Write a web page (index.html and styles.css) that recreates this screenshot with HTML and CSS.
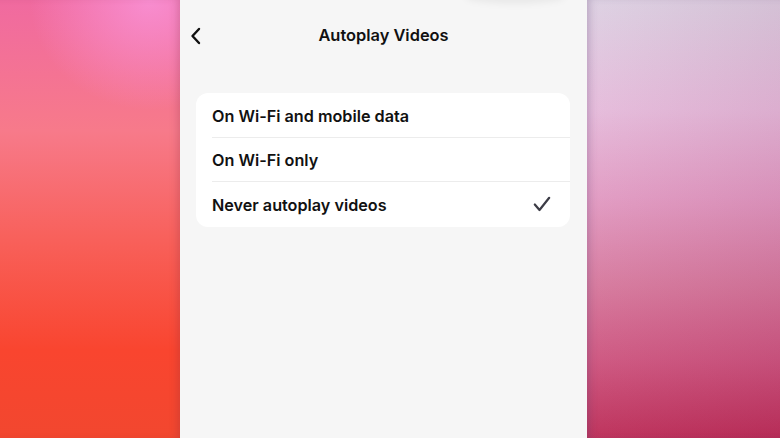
FILE: index.html
```html
<!DOCTYPE html>
<html lang="en">
<head>
  <meta charset="UTF-8" />
  <title>Autoplay Videos</title>
  <link rel="stylesheet" href="styles.css">
</head>
<body>
  <div class="backdrop left"></div>
  <div class="phone">
    <div class="island-shadow"></div>
    <div class="header">
      <button class="back" aria-label="Back">
        <svg width="12" height="18" viewBox="0 0 12 18"><path d="M9 2 L2.5 9 L9 16" fill="none" stroke="#111" stroke-width="2.4" stroke-linecap="round" stroke-linejoin="round"/></svg>
      </button>
      <div class="title">Autoplay Videos</div>
    </div>
    <div class="options">
      <div class="option">On Wi-Fi and mobile data</div>
      <div class="option">On Wi-Fi only</div>
      <div class="option selected">
        <span>Never autoplay videos</span>
        <svg class="check" width="18" height="16" viewBox="0 0 18 16"><path d="M1.8 8.5 L6.5 14 L16.2 1.8" fill="none" stroke="#3c3c46" stroke-width="2.2" stroke-linecap="round" stroke-linejoin="round"/></svg>
      </div>
    </div>
  </div>
  <div class="backdrop right"></div>
</body>
</html>
```

FILE: styles.css
```css
html, body {
  margin: 0;
  padding: 0;
  height: 100%;
  width: 100%;
  overflow: hidden;
}

body {
  display: flex;
  font-family: Inter, 'Liberation Sans', sans-serif;
  color: #111;
}

.backdrop {
  height: 100%;
}

.backdrop.left {
  width: 180px;
  background:
    radial-gradient(ellipse 120px 110px at 150px 0px, rgba(250, 150, 220, 0.8), rgba(250, 150, 220, 0) 100%),
    linear-gradient(180deg, #f06aa0 0%, #f77a8a 30%, #f8605a 55%, #f9452f 80%, #f2472f 100%);
  box-shadow: inset -6px 0 8px -4px rgba(120, 40, 60, 0.25);
}

.backdrop.right {
  flex-grow: 1;
  background:
    linear-gradient(100deg, rgba(255, 255, 255, 0.05) 0%, rgba(120, 30, 80, 0.12) 100%),
    linear-gradient(180deg, #dcd0e2 0%, #e6bcdc 25%, #e39cc4 45%, #d87a9e 65%, #d05680 82%, #bf2e58 100%);
  box-shadow: inset 6px 0 8px -4px rgba(90, 60, 110, 0.3);
}

.phone {
  width: 407px;
  height: 100%;
  background-color: #f6f6f6;
  position: relative;
  display: flex;
  flex-direction: column;
}

.island-shadow {
  position: absolute;
  top: -10px;
  left: 285px;
  width: 100px;
  height: 14px;
  border-radius: 50%;
  background: rgba(0, 0, 0, 0.05);
  filter: blur(3px);
}

.header {
  height: 70px;
  display: flex;
  align-items: center;
  justify-content: center;
  position: relative;
}

.back {
  position: absolute;
  left: 10px;
  top: 27px;
  background: none;
  border: none;
  padding: 0;
  display: flex;
}

.title {
  font-size: 16.4px;
  font-weight: 600;
}

.options {
  margin: 23px 17px 0 16px;
  background: #fff;
  border-radius: 12px;
  padding-left: 16px;
}

.option {
  height: 44.5px;
  display: flex;
  align-items: center;
  justify-content: space-between;
  font-size: 16.2px;
  font-weight: 600;
  border-bottom: 1px solid #ececec;
  padding-right: 19px;
  padding-top: 2px;
  box-sizing: border-box;
}

.option:last-child {
  border-bottom: none;
}

.check {
  margin-top: -2px;
}
```
